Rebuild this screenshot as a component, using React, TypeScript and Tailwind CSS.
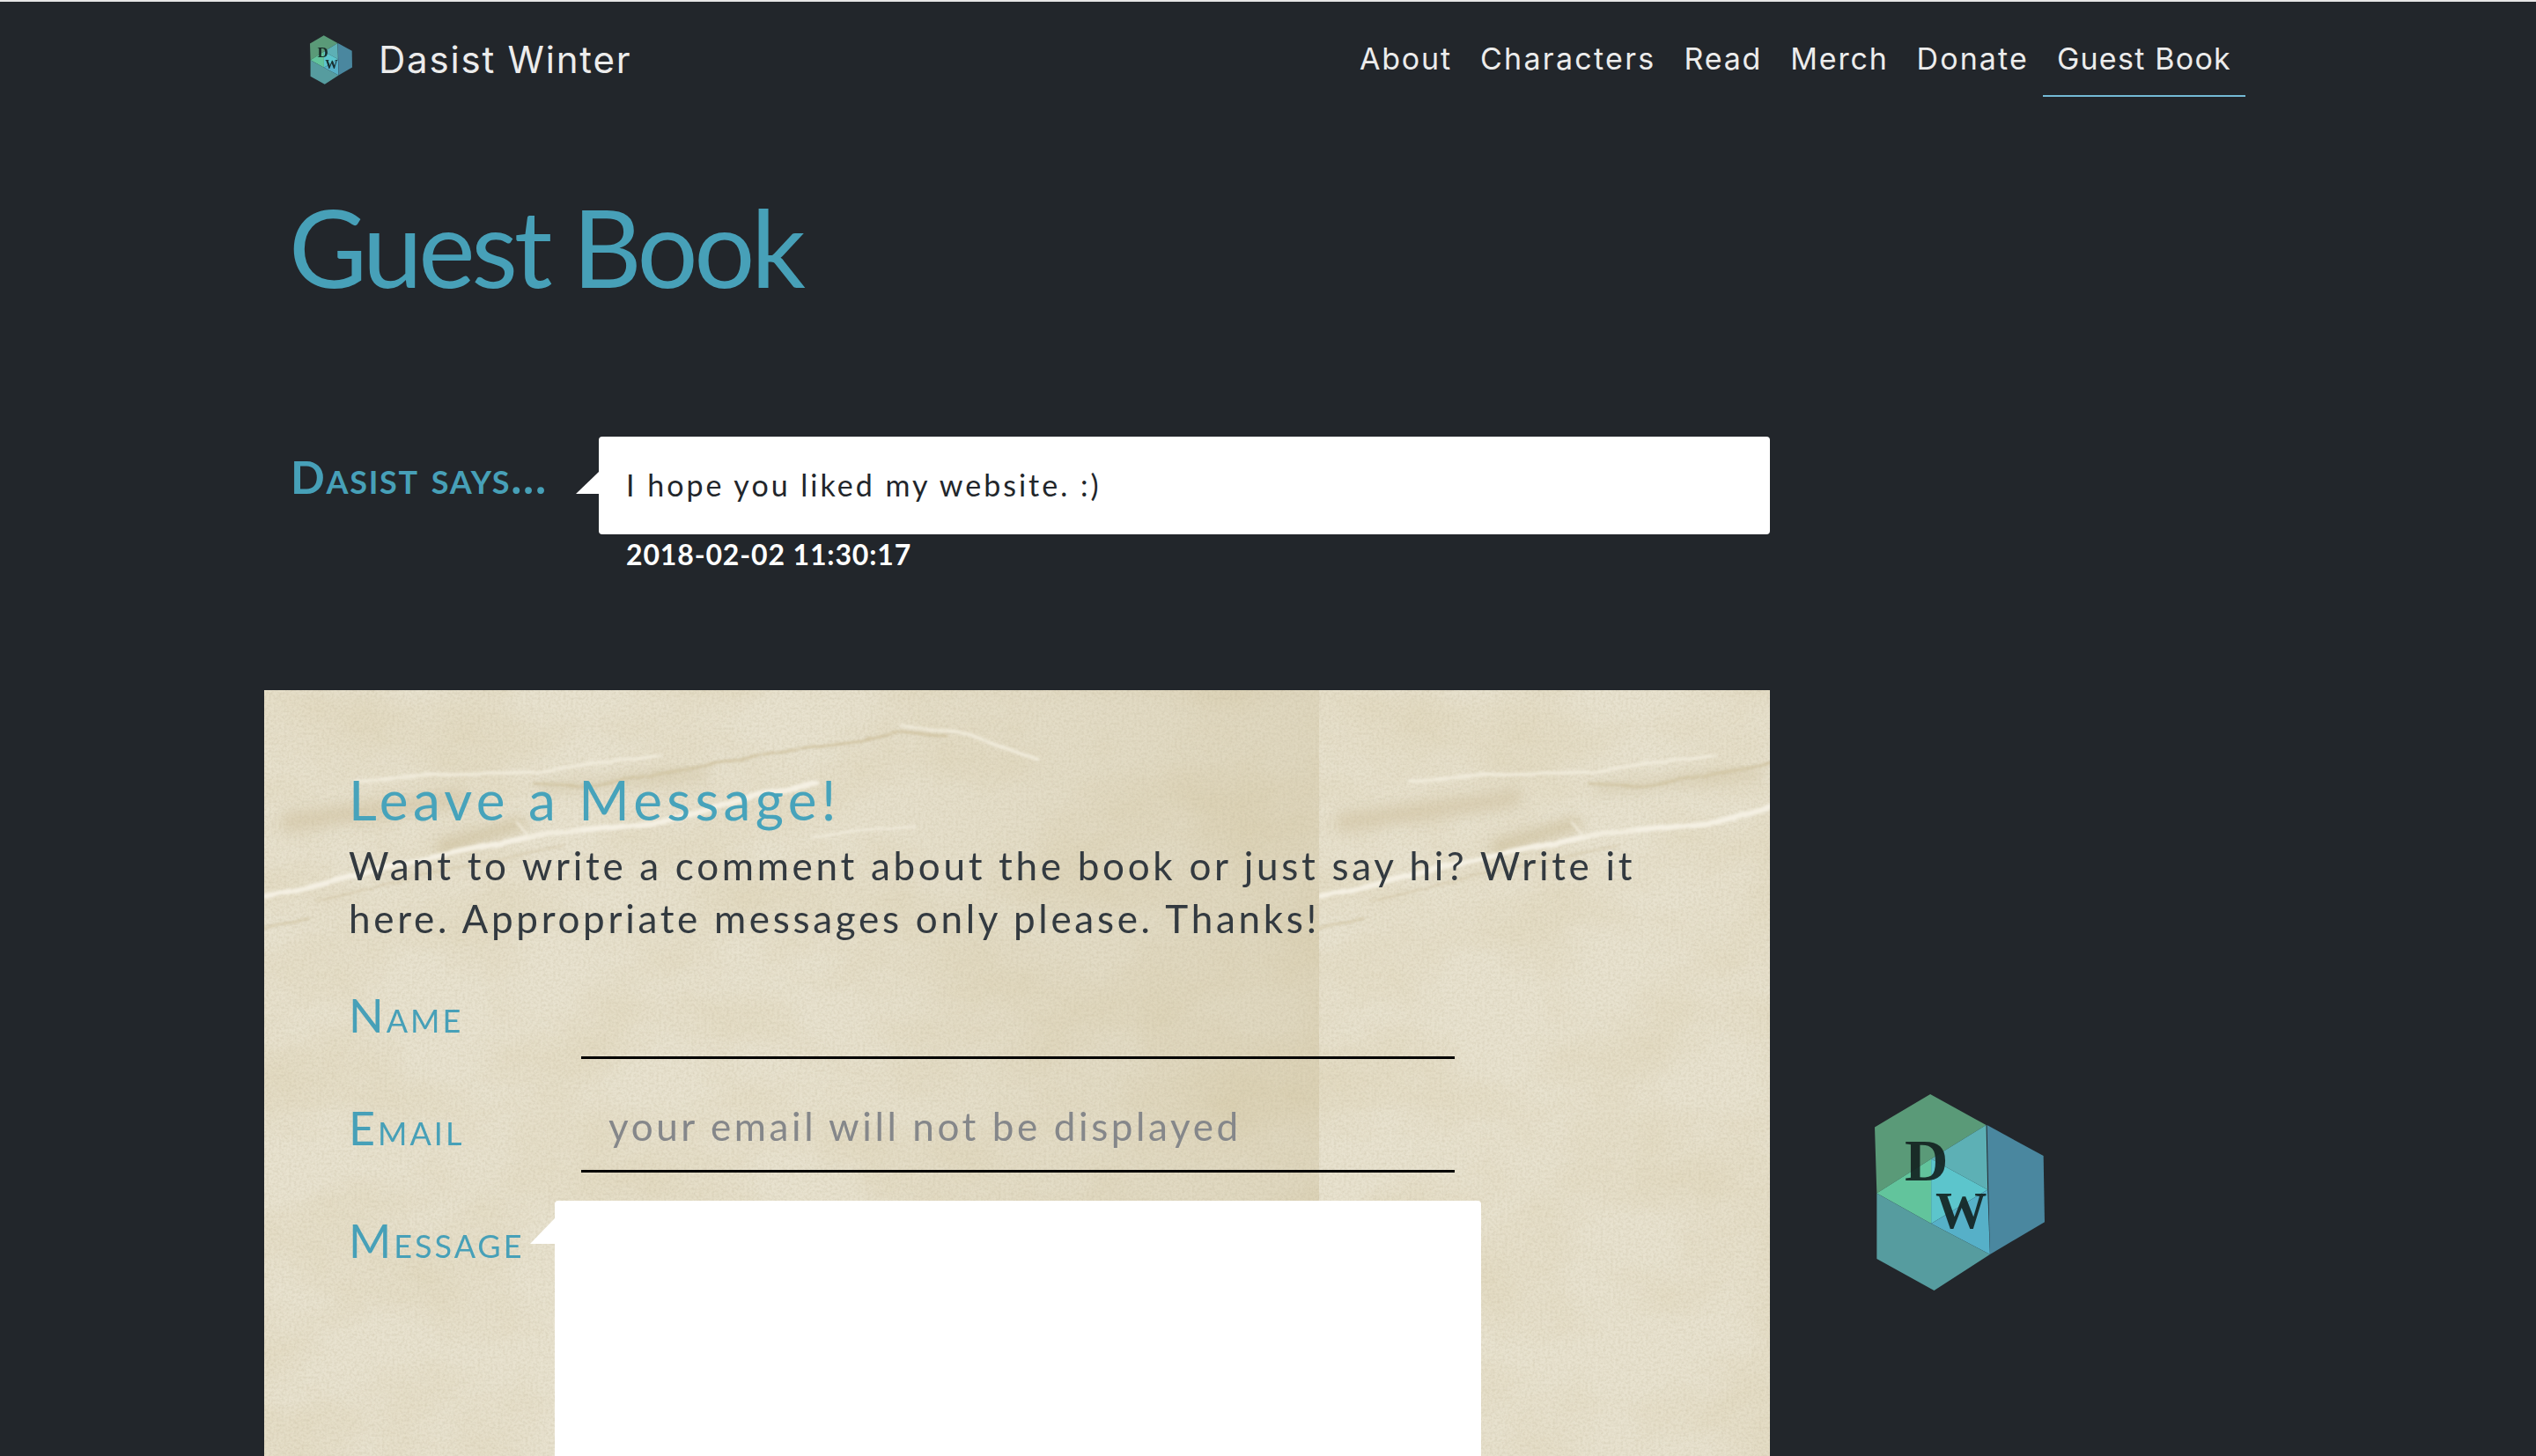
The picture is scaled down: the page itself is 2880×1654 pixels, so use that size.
import React from "react";

const navItems = [
  { label: "About", spacing: "tracking-[1.8px]" },
  { label: "Characters", spacing: "tracking-[2.3px]" },
  { label: "Read", spacing: "tracking-[1.8px]" },
  { label: "Merch", spacing: "tracking-[1.8px]" },
  { label: "Donate", spacing: "tracking-[2.1px]" },
  { label: "Guest Book", spacing: "tracking-[1.25px]" },
];

function Logo({ className }: { className: string }) {
  return (
    <svg viewBox="148 100 578 668" className={className}>
      <polygon points="148,212 337,100 527,205 340,320 155,437" fill="#5a9a78" />
      <polygon points="527,205 532,425 340,320" fill="#5db0b5" />
      <polygon points="340,320 532,425 340,540" fill="#5cc5cc" />
      <polygon points="155,437 340,320 340,540" fill="#62c49c" />
      <polygon points="340,540 532,425 540,645" fill="#56b0c8" />
      <polygon points="530,205 722,310 726,535 540,645" fill="#4a879f" />
      <polygon points="155,437 340,540 540,645 350,768 155,660" fill="#569c9f" />
      <text x="250" y="395" fontFamily="Liberation Serif" fontWeight="700" fontSize="205" fill="#12201f" opacity="0.9">D</text>
      <text x="355" y="555" fontFamily="Liberation Serif" fontWeight="700" fontSize="175" fill="#12201f" opacity="0.9">W</text>
    </svg>
  );
}

// paper texture behind the form: one 1198px tile (noise + creases), repeated once
function PaperTexture() {
  return (
    <svg viewBox="0 0 1710 870" preserveAspectRatio="none" className="absolute inset-0 w-full h-full">
      <defs>
        <filter id="blotch" x="0" y="0" width="100%" height="100%">
          <feTurbulence type="fractalNoise" baseFrequency="0.007 0.01" numOctaves="5" seed="8" />
          <feColorMatrix values="0 0 0 0 0.70  0 0 0 0 0.62  0 0 0 0 0.42  1.5 0 0 0 -0.54" />
        </filter>
        <filter id="grain" x="0" y="0" width="100%" height="100%">
          <feTurbulence type="fractalNoise" baseFrequency="0.35" numOctaves="3" seed="3" />
          <feColorMatrix values="0 0 0 0 0.50  0 0 0 0 0.44  0 0 0 0 0.30  0 1.6 0 0 -0.58" />
        </filter>
        <filter id="wrinkle" x="-5%" y="-20%" width="110%" height="140%">
          <feTurbulence type="fractalNoise" baseFrequency="0.02" numOctaves="2" seed="5" result="n" />
          <feDisplacementMap in="SourceGraphic" in2="n" scale="7" />
          <feGaussianBlur stdDeviation="1.8" />
        </filter>
        <filter id="wide">
          <feGaussianBlur stdDeviation="7" />
        </filter>
        <linearGradient id="shade" x1="0" x2="1" y1="0" y2="0">
          <stop offset="0.5" stopColor="#b9a878" stopOpacity="0" />
          <stop offset="1" stopColor="#b9a878" stopOpacity="0.2" />
        </linearGradient>
        <clipPath id="tileClip">
          <rect width="1198" height="870" />
        </clipPath>
        <g id="tile" clipPath="url(#tileClip)">
          <rect width="1198" height="870" fill="#e8e2cf" />
          <rect width="1198" height="870" filter="url(#blotch)" opacity="0.6" />
          <rect width="1198" height="870" fill="url(#shade)" />
          <rect width="1198" height="870" filter="url(#grain)" opacity="0.35" />
          <g fill="none" filter="url(#wide)" strokeLinecap="round">
            <path d="M204 178 L290 152" stroke="#c4b48c" strokeWidth="16" opacity="0.5" />
            <path d="M30 150 L140 135 220 122" stroke="#c9ba94" strokeWidth="22" opacity="0.4" />
            <path d="M320 112 L500 94" stroke="#c9ba94" strokeWidth="14" opacity="0.35" />
          </g>
          <g fill="none" filter="url(#wrinkle)" strokeLinecap="round">
            <path d="M0 233 L51 223 128 203 306 166 459 149 561 119 628 106" stroke="#f4f0e3" strokeWidth="6" />
            <path d="M102 103 L214 95 316 93 449 73" stroke="#f0ebdb" strokeWidth="3.5" />
            <path d="M286 149 L300 166 360 160" stroke="#f0ebdb" strokeWidth="2.5" />
            <path d="M510 84 L602 68 679 58 724 47 776 53" stroke="#c9ba94" strokeWidth="2.5" opacity="0.8" />
            <path d="M724 40 L800 50 880 80" stroke="#f0ebdb" strokeWidth="3.5" />
            <path d="M306 106 L367 109 485 89 510 84" stroke="#c9ba94" strokeWidth="2.5" opacity="0.7" />
            <path d="M0 273 L51 259" stroke="#c9ba94" strokeWidth="2.5" opacity="0.6" />
            <path d="M60 240 L200 205 340 178" stroke="#c9ba94" strokeWidth="2.5" opacity="0.4" />
            <path d="M620 165 L740 155" stroke="#f0ebdb" strokeWidth="2.5" />
          </g>
        </g>
      </defs>
      <use href="#tile" />
      <use href="#tile" x="1198" />
    </svg>
  );
}

export default function App() {
  return (
    <div className="relative h-[1654px] overflow-hidden bg-[#22262b] border-t-2 border-[#e6e6e6] font-[Lato,sans-serif]">
      {/* Header */}
      <header className="flex items-start justify-between w-[2280px] h-[108px] ml-[300px] pl-[52px] pr-[30px]">
        <div className="flex items-center gap-[30px] pt-[38px]">
          <Logo className="w-[48px] h-[56px]" />
          <span className="font-[Inter,sans-serif] text-[42px] leading-[56px] tracking-[1.8px] text-[#ececec]">Dasist Winter</span>
        </div>
        <nav className="flex">
          {navItems.map((item) => (
            <a
              key={item.label}
              className={
                "h-[108px] px-[16px] pt-[45px] font-[Inter,sans-serif] text-[34px] leading-[40px] text-[#ececec] " +
                item.spacing +
                (item.label === "Guest Book" ? " border-b-2 border-[#74bad6]" : "")
              }
            >
              {item.label}
            </a>
          ))}
        </nav>
      </header>

      <main>
        <h1 className="h-[140px] mt-[100px] pl-[328px] text-[122px] leading-[140px] tracking-[-4.4px] text-[#47a0b8]">Guest Book</h1>

        {/* Comment */}
        <div className="flex mt-[146px] pl-[330px]">
          <div className="w-[350px] pt-[19px] text-[51px] leading-[54px] font-bold tracking-[1.7px] [font-variant:small-caps] text-[#47a0b8]">Dasist says...</div>
          <div>
            <div className="relative flex items-center w-[1330px] h-[111px] pl-[31px] pb-[2px] rounded bg-white text-[34px] tracking-[3px] text-[#22262b]">
              <div className="absolute left-[-26px] top-[40px] w-0 h-0 border-b-[25px] border-b-white border-l-[26px] border-l-transparent" />
              I hope you liked my website. :)
            </div>
            <div className="h-[46px] pl-[31px] text-[32px] leading-[46px] font-bold tracking-[0.85px] text-white">2018-02-02 11:30:17</div>
          </div>
        </div>

        {/* Guest book form */}
        <section className="relative w-[1710px] h-[870px] mt-[131px] ml-[300px] overflow-hidden">
          <PaperTexture />
          <div className="relative pl-[96px] pt-[94px]">
            <h2 className="text-[62px] leading-[60px] tracking-[5.3px] text-[#47a3bb]">Leave a Message!</h2>
            <p className="w-[1520px] mt-[15px] text-[44px] leading-[60px] tracking-[3.7px] text-[#333a40]">
              Want to write a comment about the book or just say hi? Write it here. Appropriate messages only please. Thanks!
            </p>
            <div className="flex items-center mt-[27px]">
              <label className="w-[264px] pt-[2px] text-[52px] tracking-[3px] [font-variant:small-caps] text-[#47a0b8]">Name</label>
              <input className="w-[992px] h-[103px] border-b-[3px] border-black bg-transparent px-[31px] text-[44px] outline-none" />
            </div>
            <div className="flex items-center mt-[26px]">
              <label className="w-[264px] text-[52px] tracking-[3px] [font-variant:small-caps] text-[#47a0b8]">Email</label>
              <input
                placeholder="your email will not be displayed"
                className="w-[992px] h-[103px] border-b-[3px] border-black bg-transparent px-[31px] text-[44px] tracking-[3.6px] outline-none placeholder:text-[#85878a]"
              />
            </div>
            <div className="flex items-start mt-[32px]">
              <label className="w-[234px] pt-[15px] text-[52px] leading-[60px] tracking-[3px] [font-variant:small-caps] text-[#47a0b8]">Message</label>
              <div className="relative">
                <div className="absolute left-[-28px] top-[20px] w-0 h-0 border-b-[29px] border-b-white border-l-[28px] border-l-transparent" />
                <textarea className="block w-[1052px] h-[400px] rounded bg-white outline-none resize-none" />
              </div>
            </div>
          </div>
        </section>
      </main>

      {/* Floating logo */}
      <Logo className="absolute left-[2129px] top-[1241px] w-[193px] h-[223px]" />
    </div>
  );
}
